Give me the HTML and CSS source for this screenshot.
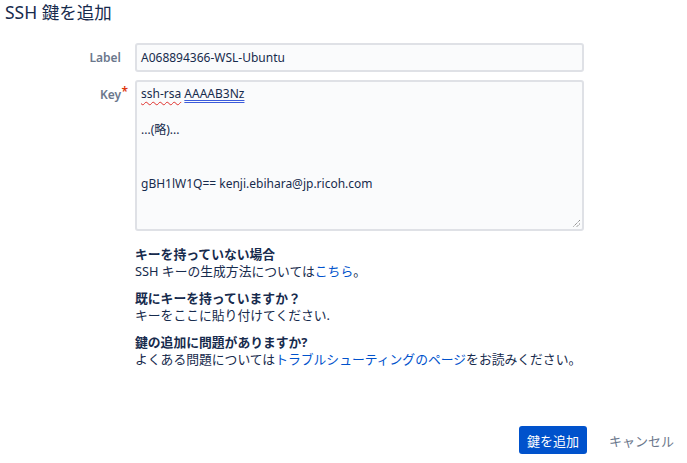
FILE: index.html
```html
<!DOCTYPE html>
<html lang="ja">
<head>
<meta charset="utf-8">
<title>SSH 鍵を追加</title>
<link rel="stylesheet" href="styles.css">
</head>
<body>
<h1 class="title">SSH 鍵を追加</h1>
<form class="form">
  <div class="row">
    <label class="label">Label</label>
    <div class="field"><div class="input">A068894366-WSL-Ubuntu</div></div>
  </div>
  <div class="row">
    <label class="label">Key<span class="req">*</span></label>
    <div class="field">
      <div class="textarea"><div><span class="spell">ssh-rsa</span> <span class="gram">AAAAB3Nz</span></div><div>&nbsp;</div><div>...(略)...</div><div>&nbsp;</div><div>&nbsp;</div><div>gBH1lW1Q== kenji.ebihara@jp.ricoh.com</div>
        <svg class="grip" width="9" height="9" viewBox="0 0 9 9"><path d="M8 1L1 8M8 4.5L4.5 8" stroke="#777" stroke-width="1" stroke-dasharray="1.2 0.8"/></svg>
      </div>
    </div>
  </div>
  <div class="row">
    <div class="label"></div>
    <div class="field help">
      <div class="group">
        <div class="h">キーを持っていない場合</div>
        <div>SSH キーの生成方法については<a class="link" href="#">こちら</a>。</div>
      </div>
      <div class="group">
        <div class="h">既にキーを持っていますか？</div>
        <div>キーをここに貼り付けてください.</div>
      </div>
      <div class="group">
        <div class="h">鍵の追加に問題がありますか?</div>
        <div>よくある問題については<a class="link" href="#">トラブルシューティングのページ</a>をお読みください。</div>
      </div>
    </div>
  </div>
  <div class="buttons">
    <button type="button" class="primary">鍵を追加</button>
    <button type="button" class="cancel">キャンセル</button>
  </div>
</form>
</body>
</html>
```
FILE: styles.css
```css
html, body {
  margin: 0;
  padding: 0;
  background: #fff;
}
body {
  width: 687px;
  height: 463px;
  overflow: hidden;
  font-family: "Noto Sans", "Noto Sans CJK JP", sans-serif;
  font-size: 12px;
  color: #172B4D;
}
.title {
  margin: 0;
  padding: 0 0 0 5px;
  font-size: 17.5px;
  line-height: 24px;
  font-weight: 400;
  color: #172B4D;
}
.form {
  margin-top: 19px;
}
.row {
  display: grid;
  grid-template-columns: 121px 449px;
  column-gap: 14px;
  margin-bottom: 8px;
}
.label {
  text-align: right;
  color: #6B778C;
  font-weight: 600;
  font-size: 12px;
  line-height: 18px;
  padding-top: 6px;
  position: relative;
}
.req {
  position: absolute;
  right: -7px;
  top: 3px;
  color: #DE350B;
  font-size: 12px;
}
.input {
  height: 25px;
  border: 2px solid #DFE1E6;
  border-radius: 3px;
  background: #FAFBFC;
  padding: 0 4px;
  line-height: 25px;
  font-size: 12px;
}
.textarea {
  position: relative;
  border: 2px solid #DFE1E6;
  border-radius: 3px;
  background: #FAFBFC;
  padding: 3px 4px;
  font-size: 12px;
  line-height: 18px;
  box-sizing: content-box;
  height: 141px;
}
.spell {
  text-decoration: underline wavy #E0312D;
  text-decoration-thickness: 1px;
  text-underline-offset: 3px;
}
.gram {
  text-decoration: underline double #3B5BDB;
  text-decoration-thickness: 1px;
  text-underline-offset: 2px;
}
.grip {
  position: absolute;
  right: 1px;
  bottom: 1px;
}
.help {
  padding-top: 7px;
  font-size: 12.8px;
  line-height: 17px;
}
.group {
  margin-bottom: 10px;
}
.h {
  font-weight: 700;
}
.link {
  color: #0052CC;
  text-decoration: none;
}
.buttons {
  display: flex;
  justify-content: flex-end;
  align-items: center;
  gap: 0;
  margin-top: 48px;
  padding-right: 3px;
}
.buttons button {
  font-family: inherit;
  font-size: 13px;
  white-space: nowrap;
  border: 0;
  border-radius: 3px;
  height: 28px;
  cursor: pointer;
}
.primary {
  background: #0052CC;
  color: #fff;
  width: 68px;
  padding: 0;
}
.cancel {
  background: transparent;
  color: #6B778C;
  padding: 0 10px 0 22px;
}
```
